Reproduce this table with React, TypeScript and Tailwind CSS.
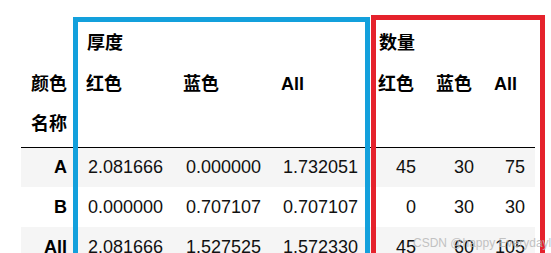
import React from 'react'

const font = { fontFamily: '"Liberation Sans", "Noto Sans CJK SC", sans-serif' }

const rows = [
  { name: 'A', v: ['2.081666', '0.000000', '1.732051', '45', '30', '75'] },
  { name: 'B', v: ['0.000000', '0.707107', '0.707107', '0', '30', '30'] },
  { name: 'All', v: ['2.081666', '1.527525', '1.572330', '45', '60', '105'] },
]

const widths = ['w-[97px]', 'w-[98px]', 'w-[97px]', 'w-[58px]', 'w-[58px]', 'w-[51px]']

export default function App() {
  return (
    <div
      className="relative w-[551px] h-[253px] overflow-hidden bg-white text-[18px] leading-[20px] text-black"
      style={font}
    >
      <div className="pl-[21px] pt-[22px]">
        <table className="border-collapse table-fixed whitespace-nowrap">
          <thead>
            <tr className="h-[41px]">
              <th className="w-[55px] px-[11px]" />
              <th colSpan={3} className="px-[11px] text-left font-bold">厚度</th>
              <th colSpan={3} className="px-[11px] text-left font-bold">数量</th>
            </tr>
            <tr className="h-[41px]">
              <th className="w-[55px] pr-[9px] text-right font-bold">颜色</th>
              {['红色', '蓝色', 'All', '红色', '蓝色', 'All'].map((h, i) => (
                <th key={i} className={`${widths[i]} px-[10px] text-left font-bold`}>
                  {h}
                </th>
              ))}
            </tr>
            <tr className="h-[43px] border-b-[1.5px] border-black">
              <th className="pr-[9px] pb-[2px] text-right font-bold">名称</th>
              <th colSpan={6} />
            </tr>
          </thead>
          <tbody>
            {rows.map((r, ri) => (
              <tr key={r.name} className={`h-[40px] ${ri % 2 === 0 ? 'bg-[#f5f5f5]' : 'bg-white'}`}>
                <th className="pr-[9px] text-right font-bold">{r.name}</th>
                {r.v.map((c, ci) => (
                  <td key={ci} className="px-[10px] text-right font-normal text-[#111]">
                    {c}
                  </td>
                ))}
              </tr>
            ))}
          </tbody>
        </table>
      </div>

      {/* annotation boxes */}
      <div className="absolute left-[73px] top-[17px] w-[297px] h-[300px] border-[5px] border-[#13a0dc]" />
      <div className="absolute left-[371px] top-[15px] w-[174px] h-[300px] border-[5px] border-[#e5222c]" />

      <div className="absolute left-[413px] top-[236px] text-[12px] leading-[14px] text-[#b5b5b5] opacity-80 whitespace-nowrap">
        CSDN @happy Everydaylaa
      </div>
    </div>
  )
}
